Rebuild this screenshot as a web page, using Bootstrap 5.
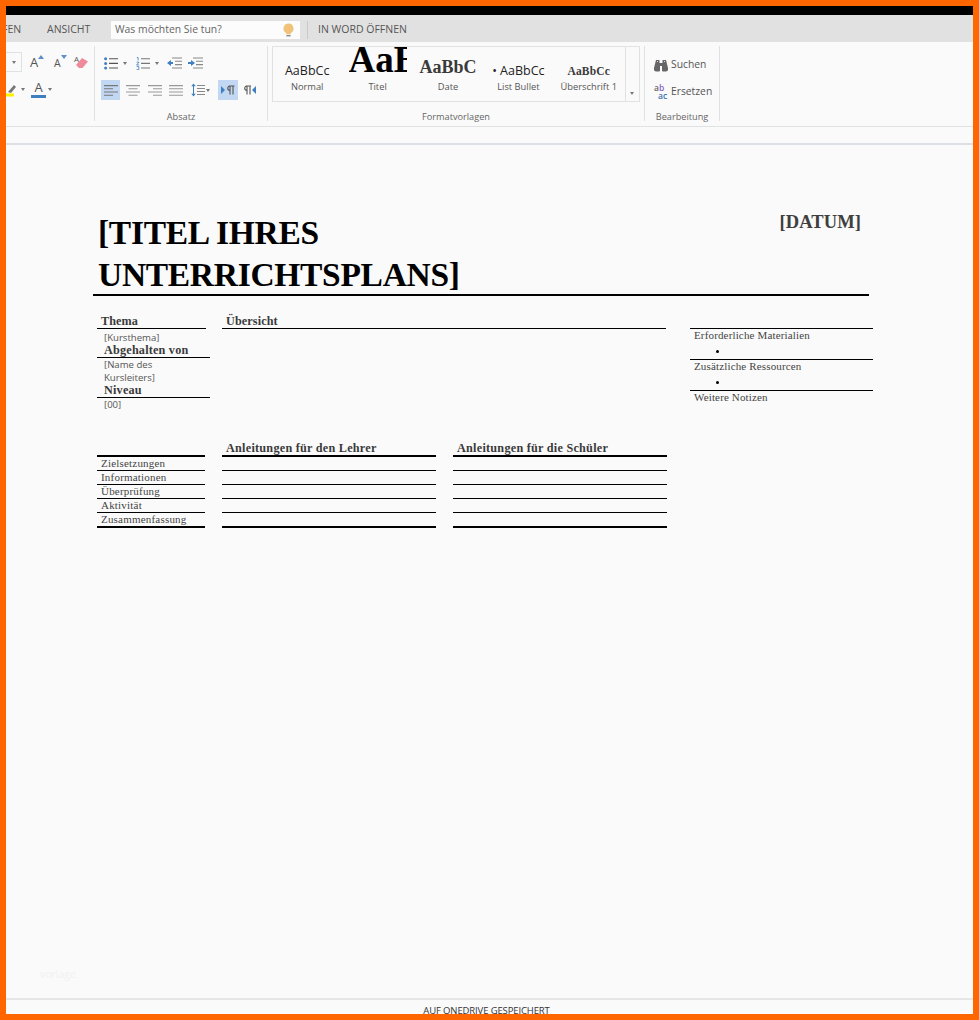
<!DOCTYPE html>
<html lang="de">
<head>
<meta charset="utf-8">
<title>Unterrichtsplan</title>
<link href="https://cdn.jsdelivr.net/npm/bootstrap@5.3.0/dist/css/bootstrap.min.css" rel="stylesheet">
<style>
html,body{margin:0;height:100%;overflow:hidden;background:#fafafa}
.app-frame{width:979px;height:1020px;border:6px solid #ff6600;overflow:hidden;font-family:"Open Sans","Noto Sans",sans-serif;color:#444;background:#fafafa}
.app-frame>*{flex:none}
.top-black{height:9px;background:#000}
.tabbar{height:27px;background:#e1e1e1;font-size:10.5px;color:#555;padding-top:3px}
.tab-a{width:45px;margin-left:-4px}
.tab-b{width:64px}
.searchbox{width:189px;height:18px;background:#fcfcfc;font-size:10.4px;color:#666;padding:0 4px}
.vsep{width:1px;height:18px;background:#c9c9c9;margin:0 10px 0 7px}
.ribbon{height:85px;background:#fafafa;border-bottom:1px solid #dfe1e3}
.rgroup{position:relative;height:75px;margin-top:4px;border-right:1px solid #dfe1e3;flex:none}
.g-font{width:89px}
.g-para{width:173px}
.g-style{width:377px}
.g-edit{width:75px}
.glabel{position:absolute;left:0;right:0;top:65px;text-align:center;font-size:9.2px;color:#666;line-height:12px}
.irow{display:flex;align-items:center;position:absolute;left:0}
.irow svg{display:block;flex:none}
.r1{top:7px;height:20px}
.r2{top:34px;height:20px}
.hl{background:#c2d7f2}
.ibtn{width:20px;height:20px;display:flex;align-items:center;justify-content:center;flex:none}
.ibtn-a{width:19px}
.caret-s{width:0;height:0;border:2.5px solid transparent;border-top:3px solid #777;border-bottom:0;flex:none}
.sizebox{width:16px;height:20px;border:1px solid #dfe1e3;border-left:0;display:flex;align-items:center;justify-content:center}
.glyph-a{position:relative;display:block;line-height:14px;height:15px;color:#555;flex:none}
.glyph-lg{font-size:13px;width:14px;margin-left:8px}
.glyph-sm{font-size:10.5px;width:12px;margin-left:10px;padding-top:1px}
.glyph-col{font-size:13px;width:15px;margin-left:6px;text-align:center;height:17px;line-height:13px;border-bottom:3px solid #3f7fc1}
.glyph-er{font-size:8px;width:14px;height:14px;margin-left:8px;line-height:8px}
.glyph-a svg{position:absolute}
.gallery{position:absolute;left:4px;top:0;width:368px;height:56px;border:1px solid #dfe1e3;display:flex}
.sitem{width:70.4px;flex:none;height:54px;overflow:hidden;display:flex;flex-direction:column;align-items:center}
.sitem-first{margin-left:-1px}
.ssample{height:34px;flex:none;display:flex;align-items:flex-end;justify-content:center;white-space:nowrap;color:#222;line-height:1}
.sname{font-size:9.3px;color:#555;line-height:12px;white-space:nowrap}
.s-ui{font-size:12.5px;padding-bottom:4px}
.s-title{font:bold 37px "Liberation Serif",serif;color:#000;width:58px;overflow:hidden;justify-content:flex-start}
.s-date{font:bold 18px "Liberation Serif",serif;color:#3a3a3a;padding-bottom:3px}
.s-h1{font:bold 11.5px "Liberation Serif",serif;color:#3a3a3a;padding-bottom:4px;letter-spacing:.2px}
.gscroll{width:14px;height:54px;border-left:1px solid #dfe1e3;margin-left:1px;display:flex;align-items:flex-end;justify-content:center;padding-bottom:6px}
.edit-item{font-size:10.3px;color:#555;position:absolute;left:9px;display:flex;align-items:center;gap:3px;height:16px}
.abac{position:relative;display:block;width:14px;height:16px;font-size:8.5px;font-weight:600;line-height:8px;flex:none}
.abac i{font-style:normal;display:block}
.abac .ab{color:#666}
.abac .ab b{color:#8a63c4;font-weight:600}
.abac .ac{color:#3f6fb0;padding-left:4px}
.ruler{height:18px;border-bottom:2px solid #dde0e4;background:#fafafa}
.docarea{height:853px;background:#fafafa;padding:65px 0 0 87px;position:relative;font-family:"Liberation Serif",serif;color:#3f3f3f}
.doc-head{width:776px;height:86px;border-bottom:2px solid #000;display:flex;justify-content:space-between}
.doc-title{font-weight:700;font-size:33.5px;line-height:42px;color:#000;padding:2px 0 0 5px;width:400px;letter-spacing:-.3px;white-space:nowrap}
.doc-date{font-weight:700;font-size:18.5px;line-height:24px;color:#3f3f3f;padding:0 8px 0 0;letter-spacing:.1px}
.plan-top{display:flex;margin:18px 0 0 4px}
.pcol-l{width:125px;flex:none}
.pcol-m{width:444px;flex:none;margin-right:24px}
.pcol-r{width:183px;flex:none;padding-top:14px}
.hd{font-weight:700;font-size:12.2px;line-height:14px;height:15px;border-bottom:1px solid #000;color:#3a3a3a;white-space:nowrap;letter-spacing:.1px}
.hd-thema{width:109px;padding-left:4px}
.hd-sub{width:113px;padding-left:7px;height:14px;line-height:13px;letter-spacing:.2px}
.hd-over{padding-left:4px}
.lval{font-family:"Open Sans",sans-serif;font-size:9.6px;line-height:13px;padding-left:7px;color:#555;width:100px}
.lval-first{padding-top:2px;height:15px}
.rsec{border-top:1px solid #000;padding:0 0 0 4px;height:31px;font-size:11px;line-height:12px;color:#444;letter-spacing:.15px}
.rsec ul{margin:0;padding:0 0 0 35px;line-height:18px;color:#000}
.plan-grid{display:grid;grid-template-columns:108px 214px 214px;column-gap:17px;margin:21px 0 0 4px;width:570px}
.pc{height:14px;border-bottom:1px solid #000;font-size:11px;line-height:13px;padding-left:4px;color:#444;letter-spacing:.2px;white-space:nowrap}
.pc-h{height:15px;border-bottom:2px solid #000;font-weight:700;font-size:12.2px;line-height:13px;color:#3a3a3a;letter-spacing:.25px}
.pc-last{border-bottom:2px solid #000;height:15px}
.watermark{position:absolute;left:34px;top:822px;font-family:"Open Sans",sans-serif;font-size:10.5px;color:#f1f1f1}
.statusbar{border-top:2px solid #e6e6e6;height:16px;overflow:hidden;text-align:center;font-size:9.5px;color:#333;line-height:22px;background:#fafafa;letter-spacing:-.12px;padding-right:6px}
</style>
</head>
<body>
<div class="app-frame d-flex flex-column">
  <div class="top-black"></div>
  <div class="tabbar d-flex align-items-center">
    <span class="tab-a">FEN</span>
    <span class="tab-b">ANSICHT</span>
    <div class="searchbox d-flex align-items-center justify-content-between">
      <span>Was möchten Sie tun?</span>
      <svg width="13" height="15" viewBox="0 0 13 15" style="margin-right:1px"><path d="M6.5 0.5a5 5 0 0 1 3 9c-.6.6-.8 1-.8 1.800H4.300c0-.8-.2-1.200-.8-1.800a5 5 0 0 1 3-9z" fill="#f0c27a"/><rect x="4.400" y="12" width="4.200" height="1.400" fill="#8a8a8a"/></svg>
    </div>
    <div class="vsep"></div>
    <span>IN WORD ÖFFNEN</span>
  </div>
  <div class="ribbon d-flex">
    <div class="rgroup g-font">
      <div class="irow r1" style="top:6px">
        <div class="sizebox"><span class="caret-s"></span></div>
        <span class="glyph-a glyph-lg">A<svg width="6" height="4" viewBox="0 0 6 4" style="left:8px;top:0"><path d="M0 4l3-4 3 4z" fill="#5b8fc9"/></svg></span>
        <span class="glyph-a glyph-sm">A<svg width="6" height="4" viewBox="0 0 6 4" style="left:7px;top:0"><path d="M0 0h6L3 4z" fill="#5b8fc9"/></svg></span>
        <span class="glyph-a glyph-er">A<svg width="13" height="11" viewBox="0 0 13 11" style="left:1px;top:3px"><path d="M1 7L7 0l6 3.500-5.500 6.500H4z" fill="#ee8a9a"/></svg></span>
      </div>
      <div class="irow r2" style="top:33px">
        <svg width="16" height="15" viewBox="0 0 16 15"><path d="M2 10L8 3l2 2-5 6z" fill="#777"/><rect x="0" y="11.500" width="8" height="3" fill="#ffef00"/></svg>
        <span class="caret-s" style="margin-left:-1px"></span>
        <span class="glyph-a glyph-col">A</span>
        <span class="caret-s" style="margin-left:2px"></span>
      </div>
    </div>
    <div class="rgroup g-para">
      <div class="irow r1">
        <svg width="14" height="13" viewBox="0 0 14 13" style="margin-left:9px"><circle cx="1.600" cy="1.800" r="1.500" fill="#3f7fc1"/><circle cx="1.600" cy="6.400" r="1.500" fill="#3f7fc1"/><circle cx="1.600" cy="11" r="1.500" fill="#3f7fc1"/><path d="M5 1.800h9M5 6.400h9M5 11h9" stroke="#555" stroke-width="1.100"/></svg>
        <span class="caret-s" style="margin-left:5px"></span>
        <svg width="14" height="13" viewBox="0 0 14 13" style="margin-left:9px"><path d="M.8 .5h1.300v3M.6 5.200h2.400L.6 8h2.600M.6 9.600h2.200v3H.6" stroke="#3f7fc1" stroke-width=".8" fill="none"/><path d="M5 1.800h9M5 6.400h9M5 11h9" stroke="#777" stroke-width="1.100"/></svg>
        <span class="caret-s" style="margin-left:5px"></span>
        <svg width="15" height="12" viewBox="0 0 15 12" style="margin-left:8px"><path d="M5 1h10M8 4.300h7M8 7.600h7M5 11h10" stroke="#888" stroke-width="1.100"/><path d="M0 6l4-3v2h2v2H4v2z" fill="#3f7fc1"/></svg>
        <svg width="15" height="12" viewBox="0 0 15 12" style="margin-left:6px"><path d="M5 1h10M8 4.300h7M8 7.600h7M5 11h10" stroke="#888" stroke-width="1.100"/><path d="M7 6L3 3v2H0v2h3v2z" fill="#3f7fc1"/></svg>
      </div>
      <div class="irow r2">
        <div class="ibtn ibtn-a hl" style="margin-left:6px"><svg width="14" height="11" viewBox="0 0 14 11"><path d="M0 .6h14M0 3.800h9M0 7h14M0 10.200h9" stroke="#777" stroke-width="1.100"/></svg></div>
        <svg width="14" height="11" viewBox="0 0 14 11" style="margin-left:6px"><path d="M0 .6h14M2.500 3.800h9M0 7h14M2.500 10.200h9" stroke="#999" stroke-width="1.100"/></svg>
        <svg width="14" height="11" viewBox="0 0 14 11" style="margin-left:8px"><path d="M0 .6h14M5 3.800h9M0 7h14M5 10.200h9" stroke="#999" stroke-width="1.100"/></svg>
        <svg width="14" height="11" viewBox="0 0 14 11" style="margin-left:7px"><path d="M0 .6h14M0 3.800h14M0 7h14M0 10.200h14" stroke="#999" stroke-width="1.100"/></svg>
        <svg width="14" height="14" viewBox="0 0 14 14" style="margin-left:8px"><path d="M2.500 1v12" stroke="#3f7fc1" stroke-width="1"/><path d="M.3 3.200L2.500.6l2.200 2.600zM.3 10.800l2.200 2.600 2.200-2.600z" fill="#3f7fc1"/><path d="M6 2.500h8M6 5.500h8M6 8.500h8M6 11.500h8" stroke="#888" stroke-width="1.100"/></svg>
        <span class="caret-s" style="margin-left:1px"></span>
        <div class="ibtn hl" style="margin-left:8px"><svg width="14" height="10" viewBox="0 0 14 10"><path d="M0 1l4 4-4 4z" fill="#3f7fc1"/><path d="M9 1a2.200 2.200 0 0 0 0 4.500M9 1v8.400M12 1v8.400M8 1h5.500" stroke="#555" stroke-width="1.100" fill="none"/></svg></div>
        <svg width="12" height="10" viewBox="0 0 12 10" style="margin-left:6px"><path d="M3 1a2.200 2.200 0 0 0 0 4.500M3 1v8.400M6 1v8.400M2 1h5" stroke="#555" stroke-width="1.100" fill="none"/><path d="M12 1L8 5l4 4z" fill="#3f7fc1"/></svg>
      </div>
      <div class="glabel">Absatz</div>
    </div>
    <div class="rgroup g-style">
      <div class="gallery">
        <div class="sitem sitem-first"><div class="ssample s-ui">AaBbCc</div><div class="sname">Normal</div></div>
        <div class="sitem"><div class="ssample s-title">AaB</div><div class="sname">Titel</div></div>
        <div class="sitem"><div class="ssample s-date">AaBbC</div><div class="sname">Date</div></div>
        <div class="sitem"><div class="ssample s-ui">•&nbsp;AaBbCc</div><div class="sname">List Bullet</div></div>
        <div class="sitem"><div class="ssample s-h1">AaBbCc</div><div class="sname">Überschrift 1</div></div>
        <div class="gscroll"><span class="caret-s"></span></div>
      </div>
      <div class="glabel">Formatvorlagen</div>
    </div>
    <div class="rgroup g-edit">
      <div class="edit-item" style="top:11px">
        <svg width="14" height="13" viewBox="0 0 14 13"><path d="M2 1h3.500v3h3V1H12l2 8a2.500 2.500 0 0 1-2.500 3.500H9a1 1 0 0 1-1-1V7H6v4.500a1 1 0 0 1-1 1H2.500A2.500 2.500 0 0 1 0 9z" fill="#666"/><path d="M3 2.500h1M10 2.500h1" stroke="#ddd"/></svg>
        <span>Suchen</span>
      </div>
      <div class="edit-item" style="top:38px">
        <span class="abac"><i class="ab">a<b>b</b></i><i class="ac">ac</i></span>
        <span>Ersetzen</span>
      </div>
      <div class="glabel">Bearbeitung</div>
    </div>
  </div>
  <div class="ruler"></div>
  <div class="docarea">
    <div class="doc-head">
      <div class="doc-title">[TITEL IHRES<br>UNTERRICHTSPLANS]</div>
      <div class="doc-date">[DATUM]</div>
    </div>
    <div class="plan-top">
      <div class="pcol-l">
        <div class="hd hd-thema">Thema</div>
        <div class="lval lval-first">[Kursthema]</div>
        <div class="hd hd-sub">Abgehalten von</div>
        <div class="lval">[Name des Kursleiters]</div>
        <div class="hd hd-sub">Niveau</div>
        <div class="lval">[00]</div>
      </div>
      <div class="pcol-m"><div class="hd hd-over">Übersicht</div></div>
      <div class="pcol-r">
        <div class="rsec">Erforderliche Materialien<ul><li></li></ul></div>
        <div class="rsec">Zusätzliche Ressourcen<ul><li></li></ul></div>
        <div class="rsec">Weitere Notizen</div>
      </div>
    </div>
    <div class="plan-grid">
      <div class="pc pc-h"></div><div class="pc pc-h">Anleitungen für den Lehrer</div><div class="pc pc-h">Anleitungen für die Schüler</div>
      <div class="pc">Zielsetzungen</div><div class="pc"></div><div class="pc"></div>
      <div class="pc">Informationen</div><div class="pc"></div><div class="pc"></div>
      <div class="pc">Überprüfung</div><div class="pc"></div><div class="pc"></div>
      <div class="pc">Aktivität</div><div class="pc"></div><div class="pc"></div>
      <div class="pc pc-last">Zusammenfassung</div><div class="pc pc-last"></div><div class="pc pc-last"></div>
    </div>
    <div class="watermark">vorlage</div>
  </div>
  <div class="statusbar">AUF ONEDRIVE GESPEICHERT</div>
</div>
</body>
</html>
